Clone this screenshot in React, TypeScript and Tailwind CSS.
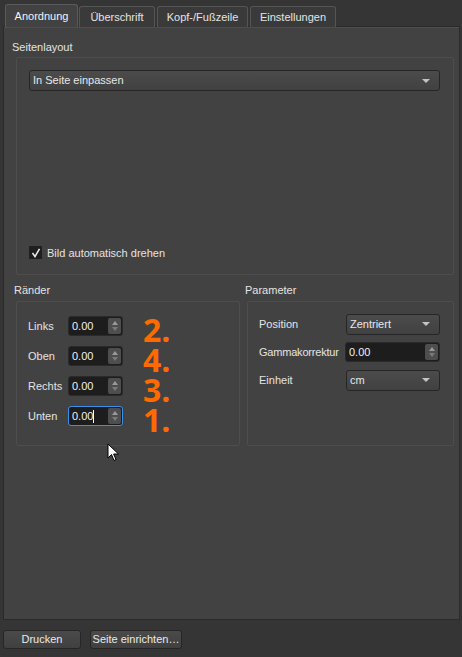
import React from 'react';

const font = { fontFamily: '"Liberation Sans", Arial, sans-serif' };

const Combo: React.FC<{ value: string; className?: string }> = ({ value, className }) => (
  <div
    className={`flex items-center justify-between h-[21px] pl-[3px] pr-[9px] rounded-[3px] border border-[#262626] bg-gradient-to-b from-[#4b4b4b] to-[#414141] text-[#e8e8e8] ${className ?? ''}`}
  >
    <span>{value}</span>
    <span className="w-0 h-0 border-l-[4px] border-r-[4px] border-t-[4px] border-l-transparent border-r-transparent border-t-[#c4c4c4]" />
  </div>
);

const Spin: React.FC<{ value: string; focused?: boolean; className?: string }> = ({ value, focused, className }) => (
  <div
    className={`flex items-stretch h-[20px] rounded-[3px] border bg-[#1d1d1d] ${focused ? 'border-[#3d8ee6]' : 'border-[#2a2a2a]'} ${className ?? ''}`}
  >
    <div className="flex-1 flex items-center pl-[3px] text-[#f0f0f0]">
      {value}
      {focused && <span className="w-px h-[13px] bg-white" />}
    </div>
    <div className="w-[13px] my-[1px] mr-[1px] rounded-[2px] bg-[#4e4e4e] flex flex-col items-center justify-center gap-[2px]">
      <span className="w-0 h-0 border-l-[3px] border-r-[3px] border-b-[4px] border-l-transparent border-r-transparent border-b-[#9a9a9a]" />
      <span className="w-0 h-0 border-l-[3px] border-r-[3px] border-t-[4px] border-l-transparent border-r-transparent border-t-[#7a7a7a]" />
    </div>
  </div>
);

const margins = [
  { label: 'Links', num: '2.' },
  { label: 'Oben', num: '4.' },
  { label: 'Rechts', num: '3.' },
  { label: 'Unten', num: '1.', focused: true },
];

const App: React.FC = () => {
  return (
    <div className="relative w-[462px] h-[657px] bg-[#353535] text-[11px] text-[#e4e4e4] overflow-hidden" style={font}>
      {/* tabs */}
      <div className="flex items-end pl-[5px] pt-[4px] h-[27px] gap-[1px]">
        <div className="h-[23px] w-[73px] flex items-center justify-center rounded-t-[3px] border border-b-0 border-[#5a5a5a] bg-[#424242] text-[#f2f2f2] relative z-10">
          Anordnung
        </div>
        <div className="h-[21px] w-[76px] flex items-center justify-center rounded-t-[3px] border border-b-0 border-[#555] bg-[#3a3a3a]">
          Überschrift
        </div>
        <div className="h-[21px] w-[91px] ml-[1px] flex items-center justify-center rounded-t-[3px] border border-b-0 border-[#555] bg-[#3a3a3a]">
          Kopf-/Fußzeile
        </div>
        <div className="h-[21px] w-[86px] ml-[1px] flex items-center justify-center rounded-t-[3px] border border-b-0 border-[#555] bg-[#3a3a3a]">
          Einstellungen
        </div>
      </div>

      {/* pane */}
      <div className="-mt-px ml-[3px] w-[457px] h-[594px] border border-[#2a2a2a] bg-[#424242] shadow-[inset_0_1px_0_#4e4e4e]">
        <div className="pl-[8px] pt-[13px] leading-[14px]">Seitenlayout</div>
        <div className="ml-[12px] mt-[3px] w-[438px] h-[218px] border border-[#4d4d4d] rounded-[2px] flex flex-col px-[12px] pt-[12px] pb-[13px]">
          <Combo value="In Seite einpassen" className="w-[411px]" />
          <div className="flex-1" />
          <div className="flex items-center gap-[5px]">
            <span className="w-[13px] h-[13px] bg-[#1f1f1f] flex items-center justify-center">
              <svg width="10" height="10" viewBox="0 0 10 10">
                <path d="M1.5 5 L4 8.5 L8.5 0.8" stroke="#f0f0f0" strokeWidth="1.5" fill="none" />
              </svg>
            </span>
            <span>Bild automatisch drehen</span>
          </div>
        </div>

        <div className="flex ml-[12px] mt-[8px] gap-[7px]">
          {/* Ränder */}
          <div className="flex flex-col">
            <div className="leading-[14px] -ml-[2px]">Ränder</div>
            <div className="mt-[4px] w-[224px] h-[145px] border border-[#4d4d4d] rounded-[2px] pl-[11px] pt-[9px]">
              {margins.map(m => (
                <div key={m.label} className="flex items-center h-[30px]">
                  <span className="w-[40px]">{m.label}</span>
                  <Spin value="0.00" focused={m.focused} className="w-[55px]" />
                  <span
                    className="ml-[20px] translate-y-[4px] text-[32px] font-bold leading-[24px] text-[#ff6a00]"
                    style={{ fontFamily: '"Open Sans", "Noto Sans", sans-serif' }}
                  >
                    {m.num}
                  </span>
                </div>
              ))}
            </div>
          </div>

          {/* Parameter */}
          <div className="flex flex-col">
            <div className="leading-[14px] -ml-[2px]">Parameter</div>
            <div className="mt-[4px] w-[207px] h-[145px] border border-[#4d4d4d] rounded-[2px] pl-[11px] pr-[13px] pt-[8px]">
              <div className="flex items-center h-[28px]">
                <span className="w-[87px]">Position</span>
                <Combo value="Zentriert" className="flex-1" />
              </div>
              <div className="flex items-center h-[28px]">
                <span className="w-[86px] tracking-[-0.2px]">Gammakorrektur</span>
                <Spin value="0.00" className="flex-1" />
              </div>
              <div className="flex items-center h-[28px]">
                <span className="w-[87px]">Einheit</span>
                <Combo value="cm" className="flex-1" />
              </div>
            </div>
          </div>
        </div>
      </div>

      {/* buttons */}
      <div className="flex gap-[9px] ml-[3px] mt-[10px]">
        <button className="w-[78px] h-[19px] rounded-[3px] border border-[#262626] bg-gradient-to-b from-[#4a4a4a] to-[#404040] text-[#eaeaea]">
          Drucken
        </button>
        <button className="w-[92px] h-[19px] rounded-[3px] border border-[#262626] bg-gradient-to-b from-[#4a4a4a] to-[#404040] text-[#eaeaea]">
          Seite einrichten…
        </button>
      </div>

      {/* mouse cursor */}
      <svg className="absolute left-[107px] top-[443px]" width="14" height="20" viewBox="0 0 14 20">
        <path d="M1 1 L1 15 L4.5 11.5 L7 17.5 L9 16.6 L6.6 11 L11.5 11 Z" fill="#fff" stroke="#000" strokeWidth="1" strokeLinejoin="round" />
      </svg>
    </div>
  );
};

export default App;
